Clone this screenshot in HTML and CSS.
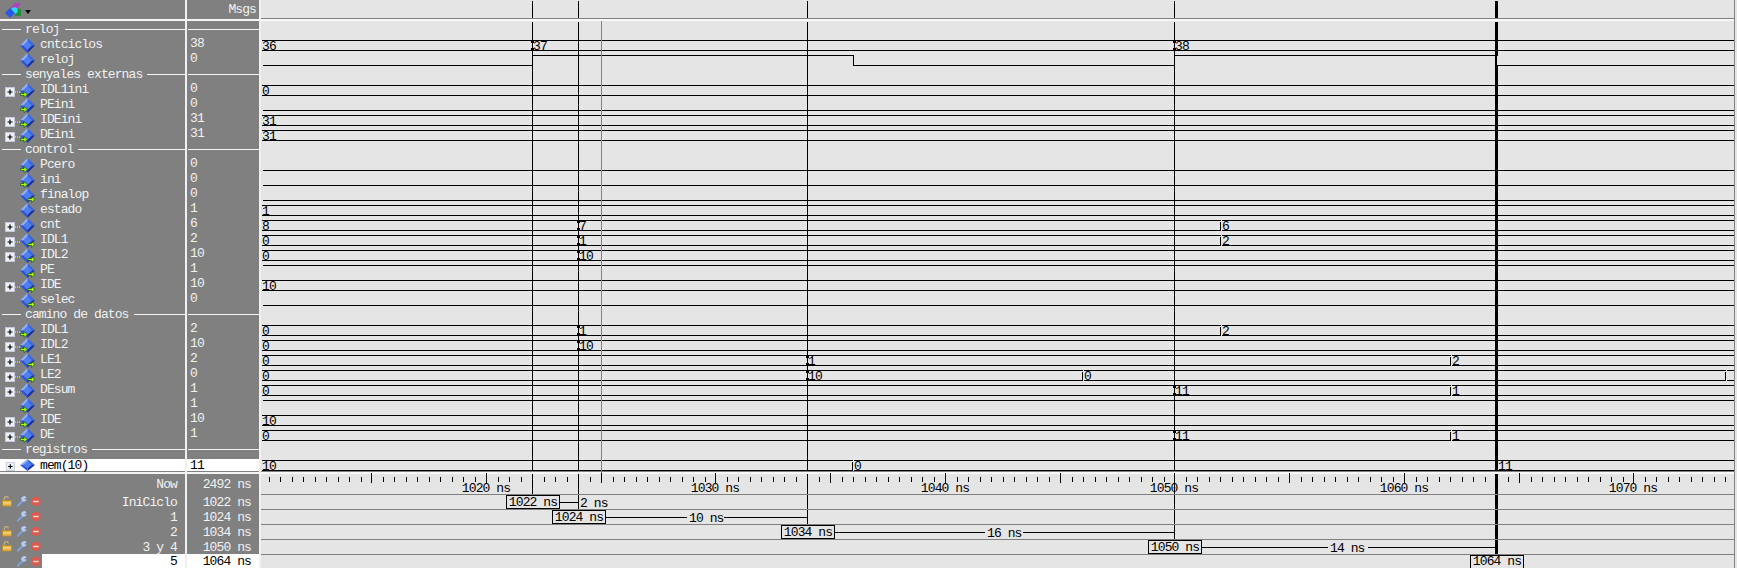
FILE: index.html
```html
<!DOCTYPE html>
<html lang="en">
<head>
<meta charset="utf-8">
<title>Wave</title>
<link rel="stylesheet" href="styles.css">
</head>
<body>
<svg class="defs" xmlns="http://www.w3.org/2000/svg">
  <symbol id="d" viewBox="0 0 15 15" preserveAspectRatio="none">
    <polygon points="7.5,0 15,7.5 7.5,7.5" fill="#3a66dc"/>
    <polygon points="7.5,0 0,7.5 7.5,7.5" fill="#8fb0f6"/>
    <polygon points="0,7.5 7.5,15 7.5,7.5" fill="#2a54d8"/>
    <polygon points="15,7.5 7.5,15 7.5,7.5" fill="#182f9c"/>
    <polygon points="7.5,3 12,7.5 7.5,12 3,7.5" fill="#4f7ef0"/>
  </symbol>
  <symbol id="di" viewBox="0 0 15 15">
    <use href="#d" width="15" height="15"/>
    <path d="M0.5 10.5h3.5v-2l3.5 3-3.5 3v-2h-3.5z" fill="#b4f01c" stroke="#0d5a10" stroke-width=".7"/>
  </symbol>
  <symbol id="do" viewBox="0 0 15 15">
    <use href="#d" width="15" height="15"/>
    <path d="M8 10.5h3.5v-2l3.5 3-3.5 3v-2h-3.5z" fill="#b4f01c" stroke="#0d5a10" stroke-width=".7"/>
  </symbol>
  <symbol id="plus" viewBox="0 0 16 10">
    <rect x="0.5" y="0.5" width="9" height="9" fill="#eef0f6" stroke="#c4c8d8"/>
    <path d="M2.5 5h5M5 2.5v5" stroke="#000" stroke-width="1.2"/>
    <path d="M10 5h6" stroke="#e6e6e6" stroke-dasharray="1 1"/>
  </symbol>
  <symbol id="lock" viewBox="0 0 11 11">
    <path d="M2.5 5V2.6A2.2 2.2 0 0 1 7 2.2" fill="none" stroke="#c9b47a" stroke-width="1.2"/>
    <rect x="0.5" y="4.5" width="10" height="6" fill="#e8b850" stroke="#b98a2a"/>
    <path d="M1 7h9" stroke="#f6dc94"/>
  </symbol>
  <symbol id="wrench" viewBox="0 0 11 11">
    <path d="M1 10l5.5-5.5" stroke="#7ea4e8" stroke-width="2.2" stroke-linecap="round"/>
    <path d="M10.5 1.5A3 3 0 1 0 9.5 5A3 3 0 0 0 10.5 3L8.5 3.4L8 2.4z" fill="#b4ccf6"/>
  </symbol>
  <symbol id="stop" viewBox="0 0 11 11">
    <circle cx="5.5" cy="5.5" r="5.2" fill="#dc5a50"/>
    <rect x="2.5" y="4.7" width="6" height="1.6" fill="#f8dcd8"/>
  </symbol>
</svg>

<div class="app">
  <div class="names">
    <div class="hd">
      <svg class="logo" viewBox="0 0 20 18" width="20" height="18">
        <polygon points="8,7 13,2 19,2 15,8" fill="#b040c0"/>
        <rect x="13" y="8" width="6" height="7" fill="#20903c"/>
        <circle cx="12.5" cy="9.5" r="3.2" fill="#30d8e8"/>
        <polygon points="8,7 13,12 8,17 3,12" fill="#2858e8"/>
      </svg>
      <span class="caret"></span>
    </div>
    <div class="dv"><span>reloj</span></div>
    <div class="row"><span class="tree"></span><svg class="sig"><use href="#d"/></svg><span>cntciclos</span></div>
    <div class="row"><span class="tree"></span><svg class="sig"><use href="#d"/></svg><span>reloj</span></div>
    <div class="dv"><span>senyales externas</span></div>
    <div class="row"><span class="tree"><svg class="plus"><use href="#plus"/></svg></span><svg class="sig"><use href="#di"/></svg><span>IDL1ini</span></div>
    <div class="row"><span class="tree"></span><svg class="sig"><use href="#di"/></svg><span>PEini</span></div>
    <div class="row"><span class="tree"><svg class="plus"><use href="#plus"/></svg></span><svg class="sig"><use href="#di"/></svg><span>IDEini</span></div>
    <div class="row"><span class="tree"><svg class="plus"><use href="#plus"/></svg></span><svg class="sig"><use href="#di"/></svg><span>DEini</span></div>
    <div class="dv"><span>control</span></div>
    <div class="row"><span class="tree"></span><svg class="sig"><use href="#di"/></svg><span>Pcero</span></div>
    <div class="row"><span class="tree"></span><svg class="sig"><use href="#di"/></svg><span>ini</span></div>
    <div class="row"><span class="tree"></span><svg class="sig"><use href="#do"/></svg><span>finalop</span></div>
    <div class="row"><span class="tree"></span><svg class="sig"><use href="#d"/></svg><span>estado</span></div>
    <div class="row"><span class="tree"><svg class="plus"><use href="#plus"/></svg></span><svg class="sig"><use href="#d"/></svg><span>cnt</span></div>
    <div class="row"><span class="tree"><svg class="plus"><use href="#plus"/></svg></span><svg class="sig"><use href="#do"/></svg><span>IDL1</span></div>
    <div class="row"><span class="tree"><svg class="plus"><use href="#plus"/></svg></span><svg class="sig"><use href="#do"/></svg><span>IDL2</span></div>
    <div class="row"><span class="tree"></span><svg class="sig"><use href="#do"/></svg><span>PE</span></div>
    <div class="row"><span class="tree"><svg class="plus"><use href="#plus"/></svg></span><svg class="sig"><use href="#do"/></svg><span>IDE</span></div>
    <div class="row"><span class="tree"></span><svg class="sig"><use href="#do"/></svg><span>selec</span></div>
    <div class="dv"><span>camino de datos</span></div>
    <div class="row"><span class="tree"><svg class="plus"><use href="#plus"/></svg></span><svg class="sig"><use href="#di"/></svg><span>IDL1</span></div>
    <div class="row"><span class="tree"><svg class="plus"><use href="#plus"/></svg></span><svg class="sig"><use href="#di"/></svg><span>IDL2</span></div>
    <div class="row"><span class="tree"><svg class="plus"><use href="#plus"/></svg></span><svg class="sig"><use href="#do"/></svg><span>LE1</span></div>
    <div class="row"><span class="tree"><svg class="plus"><use href="#plus"/></svg></span><svg class="sig"><use href="#do"/></svg><span>LE2</span></div>
    <div class="row"><span class="tree"><svg class="plus"><use href="#plus"/></svg></span><svg class="sig"><use href="#d"/></svg><span>DEsum</span></div>
    <div class="row"><span class="tree"></span><svg class="sig"><use href="#di"/></svg><span>PE</span></div>
    <div class="row"><span class="tree"><svg class="plus"><use href="#plus"/></svg></span><svg class="sig"><use href="#di"/></svg><span>IDE</span></div>
    <div class="row"><span class="tree"><svg class="plus"><use href="#plus"/></svg></span><svg class="sig"><use href="#di"/></svg><span>DE</span></div>
    <div class="dv"><span>registros</span></div>
    <div class="row sel"><span class="tree"><svg class="plus"><use href="#plus"/></svg></span><svg class="sig"><use href="#d"/></svg><span>mem(10)</span></div>
    <div class="rule"></div>
    <div class="cnow">Now</div>
    <div class="cur"><span class="tools"><svg class="ti"><use href="#lock"/></svg><svg class="ti"><use href="#wrench"/></svg><svg class="ti"><use href="#stop"/></svg></span><span class="cn">IniCiclo</span></div>
    <div class="cur"><span class="tools"><span class="ti"></span><svg class="ti"><use href="#wrench"/></svg><svg class="ti"><use href="#stop"/></svg></span><span class="cn">1</span></div>
    <div class="cur"><span class="tools"><svg class="ti"><use href="#lock"/></svg><svg class="ti"><use href="#wrench"/></svg><svg class="ti"><use href="#stop"/></svg></span><span class="cn">2</span></div>
    <div class="cur"><span class="tools"><svg class="ti"><use href="#lock"/></svg><svg class="ti"><use href="#wrench"/></svg><svg class="ti"><use href="#stop"/></svg></span><span class="cn">3 y 4</span></div>
    <div class="cur on"><span class="tools"><span class="ti"></span><svg class="ti"><use href="#wrench"/></svg><svg class="ti"><use href="#stop"/></svg></span><span class="cn">5</span></div>
  </div>

  <div class="values">
    <div class="hd msgs">Msgs</div>
    <div class="dv"></div>
    <div class="v">38</div><div class="v">0</div>
    <div class="dv"></div>
    <div class="v">0</div><div class="v">0</div><div class="v">31</div><div class="v">31</div>
    <div class="dv"></div>
    <div class="v">0</div><div class="v">0</div><div class="v">0</div><div class="v">1</div><div class="v">6</div><div class="v">2</div><div class="v">10</div><div class="v">1</div><div class="v">10</div><div class="v">0</div>
    <div class="dv"></div>
    <div class="v">2</div><div class="v">10</div><div class="v">2</div><div class="v">0</div><div class="v">1</div><div class="v">1</div><div class="v">10</div><div class="v">1</div>
    <div class="dv"></div>
    <div class="v sel">11</div>
    <div class="rule"></div>
    <div class="cnow">2492 ns</div>
    <div class="cur"><span class="cn">1022 ns</span></div>
    <div class="cur"><span class="cn">1024 ns</span></div>
    <div class="cur"><span class="cn">1034 ns</span></div>
    <div class="cur"><span class="cn">1050 ns</span></div>
    <div class="cur on"><span class="cn">1064 ns</span></div>
  </div>

  <svg class="wave" viewBox="261 0 1476 568" xmlns="http://www.w3.org/2000/svg">
    <defs>
      <path id="tc" d="M-1 0h3v3h-3zM-1 8h3v3h-3z"/>
      <g id="tx">
        <rect x="0" y="0" width="1" height="11" class="bg"/>
        <path d="M-0.5 1.5V9.5" class="ln"/>
      </g>
      <path id="t5" d="M0.5 473V483M12 477V482M23.5 477V482M35 477V482M46.5 477V482M58 477V482M69.5 477V482M81 477V482M92.5 477V482M104 477V482" class="ln"/>
    </defs>

    <!-- header edge and bottom rule -->
    <path d="M261 18.5H1734" class="gr"/>
    <rect x="261" y="19" width="1476" height="2" class="wh"/>
    <rect x="261" y="471" width="1473" height="1" class="gy"/>
    <rect x="261" y="472" width="1473" height="2" class="wh"/>

    <!-- bus and single-bit signals -->
    <path class="ln" d="M262 40.5H1734M262 50.5H1734
      M262 85.5H1734M262 95.5H1734
      M263 110.5H1734
      M262 115.5H1734M262 125.5H1734
      M262 130.5H1734M262 140.5H1734
      M263 170.5H1734M263 185.5H1734M263 200.5H1734
      M262 205.5H1734M262 215.5H1734
      M262 220.5H1734M262 230.5H1734
      M262 235.5H1734M262 245.5H1734
      M262 250.5H1734M262 260.5H1734
      M263 265.5H1734
      M262 280.5H1734M262 290.5H1734
      M263 305.5H1734
      M262 325.5H1734M262 335.5H1734
      M262 340.5H1734M262 350.5H1734
      M262 355.5H1734M262 365.5H1734
      M262 370.5H1734M262 380.5H1734
      M262 385.5H1734M262 395.5H1734
      M263 400.5H1734
      M262 415.5H1734M262 425.5H1734
      M262 430.5H1734M262 440.5H1734
      M262 460.5H1734M262 470.5H1734"/>
    <path class="ln" d="M263 65.5H532.5V55.5H853.5V65.5H1174.5V55.5H1497.5V65.5H1734"/>

    <!-- transitions away from cursors -->
    <use href="#tx" x="1221" y="220"/><use href="#tx" x="1221" y="235"/><use href="#tx" x="1221" y="325"/>
    <use href="#tx" x="1451" y="355"/><use href="#tx" x="1451" y="385"/><use href="#tx" x="1451" y="430"/>
    <use href="#tx" x="1083" y="370"/><use href="#tx" x="1726" y="370"/><use href="#tx" x="853" y="460"/>

    <!-- cursors -->
    <path class="ln" d="M532.5 1V18M532.5 22V471M532.5 474V494
      M578.5 1V18M578.5 22V471M578.5 474V509
      M807.5 1V18M807.5 22V471M807.5 474V524
      M1174.5 1V18M1174.5 22V471M1174.5 474V539"/>
    <path class="gr" d="M601.5 21V482"/>
    <rect x="1495" y="1" width="3" height="17"/>
    <rect x="1495" y="22" width="3" height="449"/>
    <rect x="1495" y="474" width="3" height="80"/>
    <path class="lt" d="M1497.5 56V65"/>

    <!-- transitions on cursors -->
    <use href="#tc" x="532" y="40"/><use href="#tc" x="1174" y="40"/>
    <use href="#tc" x="578" y="220"/><use href="#tc" x="578" y="235"/><use href="#tc" x="578" y="250"/>
    <use href="#tc" x="578" y="325"/><use href="#tc" x="578" y="340"/>
    <use href="#tc" x="807" y="355"/><use href="#tc" x="807" y="370"/>
    <use href="#tc" x="1174" y="385"/><use href="#tc" x="1174" y="430"/>

    <!-- values -->
    <text class="wv" x="262" y="50">36</text><text class="wv" x="533" y="50">37</text><text class="wv" x="1175" y="50">38</text>
    <text class="wv" x="262" y="95">0</text>
    <text class="wv" x="262" y="125">31</text>
    <text class="wv" x="262" y="140">31</text>
    <text class="wv" x="262" y="215">1</text>
    <text class="wv" x="262" y="230">8</text><text class="wv" x="579" y="230">7</text><text class="wv" x="1222" y="230">6</text>
    <text class="wv" x="262" y="245">0</text><text class="wv" x="579" y="245">1</text><text class="wv" x="1222" y="245">2</text>
    <text class="wv" x="262" y="260">0</text><text class="wv" x="579" y="260">10</text>
    <text class="wv" x="262" y="290">10</text>
    <text class="wv" x="262" y="335">0</text><text class="wv" x="579" y="335">1</text><text class="wv" x="1222" y="335">2</text>
    <text class="wv" x="262" y="350">0</text><text class="wv" x="579" y="350">10</text>
    <text class="wv" x="262" y="365">0</text><text class="wv" x="808" y="365">1</text><text class="wv" x="1452" y="365">2</text>
    <text class="wv" x="262" y="380">0</text><text class="wv" x="808" y="380">10</text><text class="wv" x="1084" y="380">0</text>
    <text class="wv" x="262" y="395">0</text><text class="wv" x="1175" y="395">11</text><text class="wv" x="1452" y="395">1</text>
    <text class="wv" x="262" y="425">10</text>
    <text class="wv" x="262" y="440">0</text><text class="wv" x="1175" y="440">11</text><text class="wv" x="1452" y="440">1</text>
    <text class="wv" x="262" y="470">10</text><text class="wv" x="854" y="470">0</text><text class="wv" x="1498" y="470">11</text>

    <!-- time ruler -->
    <use href="#t5" x="257"/><use href="#t5" x="371"/><use href="#t5" x="486"/><use href="#t5" x="601"/>
    <use href="#t5" x="715"/><use href="#t5" x="830"/><use href="#t5" x="945"/><use href="#t5" x="1060"/>
    <use href="#t5" x="1174"/><use href="#t5" x="1289"/><use href="#t5" x="1404"/><use href="#t5" x="1519"/><use href="#t5" x="1633"/>
    <text class="rt" x="486" y="492">1020 ns</text>
    <text class="rt" x="715" y="492">1030 ns</text>
    <text class="rt" x="945" y="492">1040 ns</text>
    <text class="rt" x="1174" y="492">1050 ns</text>
    <text class="rt" x="1404" y="492">1060 ns</text>
    <text class="rt" x="1633" y="492">1070 ns</text>

    <!-- cursor lanes -->
    <path class="gr" d="M261 494.5H1734M261 509.5H1734M261 524.5H1734M261 539.5H1734M261 554.5H1734"/>
    <path class="ln" d="M560 502.5H578M606 517.5H687M724 517.5H807M835 532.5H985M1023 532.5H1174M1202 547.5H1328M1368 547.5H1495"/>

    <rect class="box" x="506.5" y="495.5" width="53" height="13"/><text class="rt" x="533" y="506">1022 ns</text>
    <text class="wv" x="580" y="507">2 ns</text>
    <rect class="box" x="552.5" y="510.5" width="53" height="13"/><text class="rt" x="579" y="521">1024 ns</text>
    <text class="wv" x="689" y="522">10 ns</text>
    <rect class="box" x="781.5" y="525.5" width="53" height="13"/><text class="rt" x="808" y="536">1034 ns</text>
    <text class="wv" x="987" y="537">16 ns</text>
    <rect class="box" x="1148.5" y="540.5" width="53" height="13"/><text class="rt" x="1175" y="551">1050 ns</text>
    <text class="wv" x="1330" y="552">14 ns</text>
    <rect class="box" x="1470.5" y="555.5" width="53" height="14"/><text class="rt" x="1497" y="565">1064 ns</text>

    <!-- right edge -->
    <rect x="1734" y="0" width="3" height="568" class="bg"/>
    <path class="gr" d="M1734.5 0V568"/>
  </svg>
</div>
</body>
</html>
```

FILE: styles.css
```css
html, body {
  margin: 0;
  padding: 0;
  height: 568px;
  overflow: hidden;
  background: #e5e5e5;
}

.defs {
  display: none;
}

.app {
  display: flex;
  width: 1737px;
  height: 568px;
  overflow: hidden;
  font: 13px/15px "Liberation Mono", monospace;
  letter-spacing: -0.9px;
  color: #f2f2f2;
}

.names,
.values {
  display: flex;
  flex-direction: column;
  flex: none;
  height: 568px;
  overflow: hidden;
  background: #808080;
  box-sizing: border-box;
  border-right: 2px solid #f0f0f0;
}

.names {
  width: 187px;
}

.values {
  width: 74px;
}

.hd {
  display: flex;
  align-items: center;
  flex: none;
  height: 19px;
  border-bottom: 2px solid #f4f4f4;
}

.logo {
  margin-left: 2px;
  flex: none;
}

.caret {
  margin: 5px 0 0 3px;
  border: 3px solid transparent;
  border-top: 4px solid #000;
  border-bottom: 0;
}

.msgs {
  justify-content: flex-end;
  padding-right: 3px;
  padding-bottom: 1px;
  box-sizing: content-box;
  height: 18px;
}

.dv {
  display: flex;
  align-items: center;
  flex: none;
  height: 15px;
  box-sizing: border-box;
  padding: 1px 0 0 2px;
}

.dv::before {
  content: "";
  flex: none;
  width: 19px;
  height: 1px;
  margin-right: 4px;
  background: #f4f4f4;
}

.dv::after {
  content: "";
  flex: 1;
  height: 1px;
  margin-left: 5px;
  background: #f4f4f4;
}

.values .dv {
  padding: 1px 0 0 1px;
}

.values .dv::before {
  display: none;
}

.values .dv::after {
  margin-left: 0;
}

.row {
  display: flex;
  align-items: flex-start;
  flex: none;
  height: 15px;
  line-height: 18px;
}

.tree {
  display: block;
  flex: none;
  width: 15px;
  padding-left: 5px;
  height: 15px;
}

.plus {
  display: block;
  width: 16px;
  height: 10px;
  margin-top: 6px;
}

.sig {
  flex: none;
  width: 15px;
  height: 15px;
  margin-top: 2px;
  margin-right: 5px;
}

.row.sel {
  height: 12px;
  margin-top: 3px;
  line-height: 13px;
  background: #fff;
  color: #000;
}

.row.sel .plus {
  margin-top: 3px;
  height: 9px;
}

.row.sel .sig {
  margin-top: 0;
  height: 12px;
}

.v {
  flex: none;
  height: 15px;
  padding-left: 3px;
  line-height: 16px;
}

.v.sel {
  height: 12px;
  margin-top: 3px;
  line-height: 13px;
  background: #fff;
  color: #000;
}

.rule {
  flex: none;
  height: 2px;
  margin-top: 1px;
  background: #f4f4f4;
}

.cnow {
  flex: none;
  height: 20px;
  line-height: 22px;
  padding-right: 8px;
  text-align: right;
}

.cur {
  display: flex;
  flex: none;
  height: 15px;
  line-height: 17px;
}

.tools {
  display: flex;
  flex: none;
  gap: 4.5px;
  width: 42px;
  padding: 2px 0 0 2px;
  box-sizing: border-box;
}

.ti {
  display: block;
  flex: none;
  width: 10px;
  height: 11px;
}

.cn {
  flex: 1;
  padding-right: 8px;
  text-align: right;
}

.cur.on .cn {
  background: #fff;
  color: #000;
}

.cur.on {
  height: 14px;
  line-height: 15px;
}

.wave {
  display: block;
  flex: none;
  width: 1476px;
  height: 568px;
}

.wave .ln {
  fill: none;
  stroke: #000;
  stroke-width: 1;
  shape-rendering: crispEdges;
}

.wave .gr {
  fill: none;
  stroke: #808080;
  stroke-width: 1;
  shape-rendering: crispEdges;
}

.wave .lt {
  fill: none;
  stroke: #e5e5e5;
  stroke-width: 1;
  shape-rendering: crispEdges;
}

.wave .bg {
  fill: #e5e5e5;
}

.wave .wh {
  fill: #f8f8f8;
}

.wave .gy {
  fill: #808080;
}

.wave .box {
  fill: #e5e5e5;
  stroke: #000;
  stroke-width: 1;
  shape-rendering: crispEdges;
}

.wave .wv,
.wave .rt {
  font: 13px "Liberation Mono", monospace;
  letter-spacing: -0.9px;
  fill: #000;
}

.wave .rt {
  text-anchor: middle;
}
```
